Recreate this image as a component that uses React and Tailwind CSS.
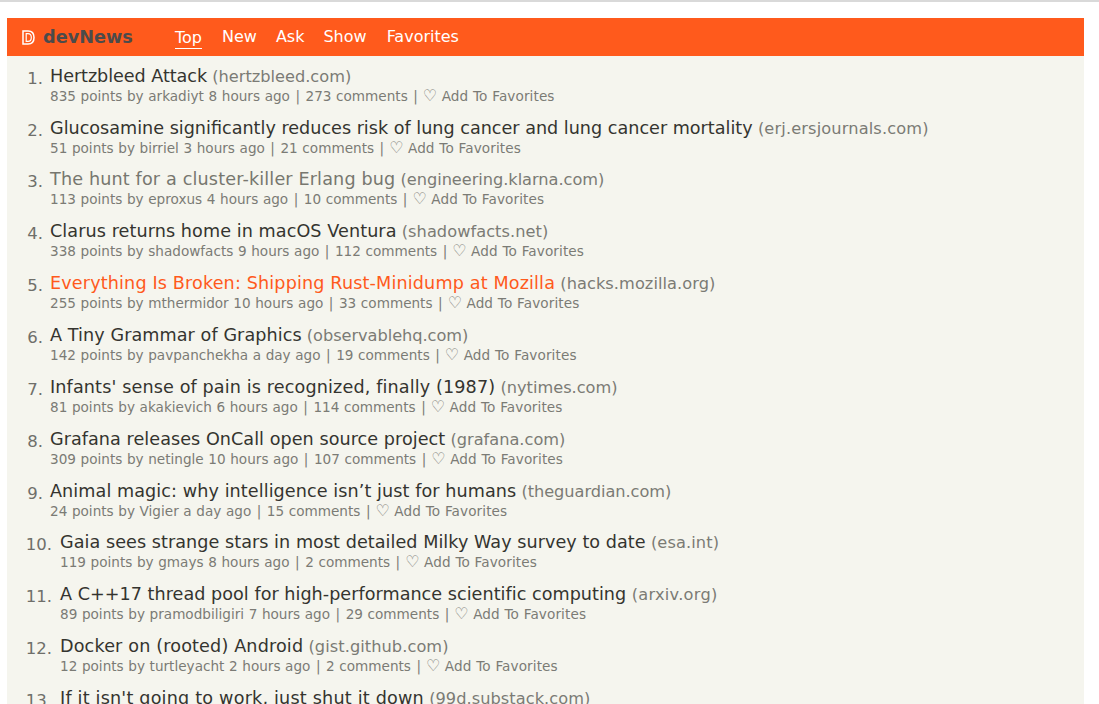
const items = [
  ["Hertzbleed Attack", "hertzbleed.com", "835 points by arkadiyt 8 hours ago", "273 comments", "", "tracking-[-0.06px]", ""],
  ["Glucosamine significantly reduces risk of lung cancer and lung cancer mortality", "erj.ersjournals.com", "51 points by birriel 3 hours ago", "21 comments", "", "tracking-[0px]", "tracking-[0.14px]"],
  ["The hunt for a cluster-killer Erlang bug", "engineering.klarna.com", "113 points by eproxus 4 hours ago", "10 comments", "visited", "tracking-[0.15px]", "tracking-[-0.04px]"],
  ["Clarus returns home in macOS Ventura", "shadowfacts.net", "338 points by shadowfacts 9 hours ago", "112 comments", "", "tracking-[0.08px]", "tracking-[0.05px]"],
  ["Everything Is Broken: Shipping Rust-Minidump at Mozilla", "hacks.mozilla.org", "255 points by mthermidor 10 hours ago", "33 comments", "hover", "tracking-[0.145px]", "tracking-[0.06px]"],
  ["A Tiny Grammar of Graphics", "observablehq.com", "142 points by pavpanchekha a day ago", "19 comments", "", "tracking-[0.08px]", "tracking-[-0.05px]"],
  ["Infants' sense of pain is recognized, finally (1987)", "nytimes.com", "81 points by akakievich 6 hours ago", "114 comments", "", "tracking-[0.13px]", ""],
  ["Grafana releases OnCall open source project", "grafana.com", "309 points by netingle 10 hours ago", "107 comments", "", "tracking-[0.05px]", ""],
  ["Animal magic: why intelligence isn’t just for humans", "theguardian.com", "24 points by Vigier a day ago", "15 comments", "", "tracking-[0.08px]", "tracking-[-0.05px]"],
  ["Gaia sees strange stars in most detailed Milky Way survey to date", "esa.int", "119 points by gmays 8 hours ago", "2 comments", "", "tracking-[0.05px]", "tracking-[0.1px]"],
  ["A C++17 thread pool for high-performance scientific computing", "arxiv.org", "89 points by pramodbiligiri 7 hours ago", "29 comments", "", "tracking-[0.03px]", "tracking-[0.27px]"],
  ["Docker on (rooted) Android", "gist.github.com", "12 points by turtleyacht 2 hours ago", "2 comments", "", "tracking-[0.15px]", "tracking-[0.07px]"],
  ["If it isn't going to work, just shut it down", "99d.substack.com", "76 points by kiyanwang 5 hours ago", "41 comments", "", "tracking-[0.2px]", "tracking-[0.05px]"],
];

function Logo() {
  return (
    <svg width="13" height="15" viewBox="0 0 13 15" fill="none" className="shrink-0">
      <path d="M1 1H6C9.8 1 12 3.6 12 7.5S9.8 14 6 14H1Z" stroke="#fff" strokeWidth="1.5" />
      <path d="M4.2 3.6H6C8.2 3.6 9.3 5.3 9.3 7.5S8.2 11.4 6 11.4H4.2Z" stroke="#fff" strokeWidth="1.2" />
    </svg>
  );
}

function Row({ n, item }) {
  const [title, host, meta, comments, state, track, hostTrack] = item;
  const titleColor = state === "visited" ? "text-[#77776f]" : state === "hover" ? "text-[#ff5a1c]" : "text-[#34342f]";
  return (
    <li className="flex h-[51.857px]">
      <span className={`shrink-0 text-right text-[#6f6f6a] text-[16.5px] leading-[24px] pt-[3px] ${n >= 10 ? "w-[45px] mr-[8px]" : "w-[36px] mr-[7px]"}`}>{n}.</span>
      <div className="min-w-0 whitespace-nowrap">
        <div className="text-[17.6px] leading-[24px]">
          <span className={`${titleColor} ${track}`}>{title}</span>
          <span className={`text-[#7b7b75] text-[16.2px] ${hostTrack}`}> ({host})</span>
        </div>
        <div className="text-[13.6px] h-[16px] leading-[16px] text-[#7b7b75] [word-spacing:0.3px] mt-[-1px]">
          <span>{meta}</span>
          <span className="mx-[5.5px]">|</span>
          <span>{comments}</span>
          <span className="ml-[5.5px] mr-[5px]">|</span>
          <span className="text-[16px] leading-[1px] mr-[4.5px]">♡</span>
          <span className="tracking-[0.1px]">Add To Favorites</span>
        </div>
      </div>
    </li>
  );
}

export default function App() {
  return (
    <div className="h-[704px] overflow-hidden bg-white" style={{ fontFamily: '"DejaVu Sans", Verdana, sans-serif' }}>
      <div className="h-[2px] bg-[#d9d9d9] mb-[16px]" />
      <div className="mx-[7px] w-[1077px]">
        <header className="h-[38px] bg-[#ff5a1c] flex items-center pl-[15px]">
          <Logo />
          <span className="ml-[8px] w-[132px] text-[17.7px] font-bold text-[#4b4b4b]">devNews</span>
          <nav className="flex gap-[20px] text-[16px] text-white">
            <span className="border-b border-white leading-[21px] mt-[1px]">Top</span>
            <span className="leading-[21px]">New</span>
            <span className="leading-[21px] ml-[-1px]">Ask</span>
            <span className="leading-[21px] ml-[-1px]">Show</span>
            <span className="leading-[21px]">Favorites</span>
          </nav>
        </header>
        <main className="bg-[#f5f5ee] h-[650px] pt-[7.8px]">
          <ol>
            {items.map((it, i) => <Row key={i} n={i + 1} item={it} />)}
          </ol>
        </main>
      </div>
    </div>
  );
}
